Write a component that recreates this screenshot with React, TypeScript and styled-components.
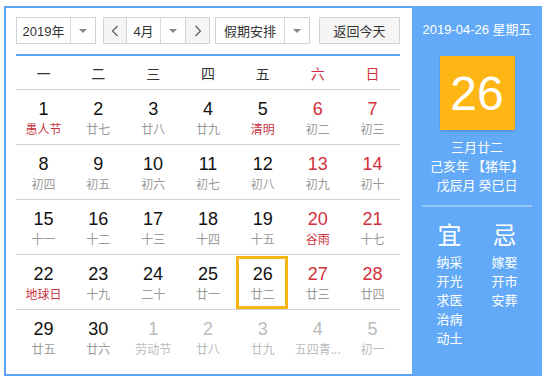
import React from 'react';
import styled, { createGlobalStyle, css } from 'styled-components';

const GlobalStyle = createGlobalStyle`
    body {
        margin: 0;
        background: #fff;
        font-family: "Liberation Sans", Arial, "Noto Sans CJK SC", sans-serif;
    }
`;

const Frame = styled.div`
    box-sizing: border-box;
    margin: 6px 0 0 4px;
    width: 538px;
    height: 370px;
    border: 2px solid #5ba3f2;
    display: flex;
`;

const Main = styled.div`
    width: 384px;
    flex-shrink: 0;
    padding: 9px 12px 0 10px;
`;

const Toolbar = styled.div`
    display: flex;
    height: 27px;
    margin-bottom: 10px;
`;

const SelectBox = styled.div<{ $w: number; $ml?: number }>`
    box-sizing: border-box;
    width: ${p => p.$w}px;
    margin-left: ${p => p.$ml ?? 0}px;
    height: 27px;
    border: 1px solid #d3d3d3;
    background: #fff;
    display: flex;
    align-items: stretch;
    font-size: 13px;
    color: #333;
`;

const SelectText = styled.div`
    flex: 1;
    display: flex;
    align-items: center;
    justify-content: center;
`;

const Arrow = styled.div`
    width: 24px;
    border-left: 1px solid #d8d8d8;
    display: flex;
    align-items: center;
    justify-content: center;
    &::after {
        content: '';
        border-left: 4px solid transparent;
        border-right: 4px solid transparent;
        border-top: 4px solid #888;
    }
`;

const NavBtn = styled.div<{ $w: number }>`
    width: ${p => p.$w}px;
    background: #f5f5f5;
    display: flex;
    align-items: center;
    justify-content: center;
`;

const MonthSelect = styled.div`
    width: 60px;
    display: flex;
    border-left: 1px solid #d3d3d3;
    border-right: 1px solid #d3d3d3;
    background: #fff;
`;

const TodayBtn = styled.div`
    box-sizing: border-box;
    margin-left: 9px;
    width: 81px;
    height: 27px;
    border: 1px solid #d3d3d3;
    background: #f5f5f5;
    display: flex;
    align-items: center;
    justify-content: center;
    font-size: 13px;
    color: #333;
`;

const WeekHead = styled.div`
    display: grid;
    grid-template-columns: repeat(7, 1fr);
    height: 33px;
    border-top: 2px solid #5ba3f2;
    border-bottom: 1px solid #d0d0d0;
`;

const WeekDay = styled.div<{ $red?: boolean }>`
    display: flex;
    align-items: center;
    justify-content: center;
    font-size: 14px;
    padding-top: 1px;
    color: ${p => (p.$red ? '#d0303d' : '#333')};
    font-family: "Noto Sans CJK SC", sans-serif;
`;

const Row = styled.div<{ $last?: boolean }>`
    display: grid;
    grid-template-columns: repeat(7, 1fr);
    height: 54px;
    border-bottom: ${p => (p.$last ? 'none' : '1px solid #d0d0d0')};
`;

const Cell = styled.div<{ $sel?: boolean }>`
    position: relative;
    display: flex;
    flex-direction: column;
    align-items: center;
    padding-top: 9px;
    box-sizing: border-box;
    ${p =>
        p.$sel &&
        css`
            &::before {
                content: '';
                position: absolute;
                left: 1px;
                right: 2px;
                top: 1px;
                bottom: 0px;
                border: 3px solid #f6b517;
            }
        `}
`;

const DayNum = styled.div<{ $tone: 'normal' | 'red' | 'gray' }>`
    font-size: 18px;
    line-height: 20px;
    color: ${p => (p.$tone === 'red' ? '#d0303d' : p.$tone === 'gray' ? '#bbb' : '#111')};
`;

const Lunar = styled.div<{ $tone: 'normal' | 'red' | 'gray' }>`
    margin-top: 2px;
    font-size: 12px;
    line-height: 16px;
    font-family: "Noto Sans CJK SC", sans-serif;
    color: ${p => (p.$tone === 'red' ? '#c8333d' : p.$tone === 'gray' ? '#bbb' : '#999')};
    white-space: nowrap;
`;

const Side = styled.div`
    width: 130px;
    flex-shrink: 0;
    margin: -2px -2px -2px 0;
    background: #62aaf8;
    color: #fff;
    display: flex;
    flex-direction: column;
    align-items: center;
    font-family: "Noto Sans CJK SC", sans-serif;
`;

const DateLine = styled.div`
    margin-top: 16px;
    font-size: 13px;
    line-height: 16px;
    font-family: "Liberation Sans", Arial, "Noto Sans CJK SC", sans-serif;
`;

const BigDay = styled.div`
    margin-top: 18px;
    width: 75px;
    height: 74px;
    background: #fdb614;
    box-shadow: 0 1px 2px rgba(0, 0, 0, 0.2);
    display: flex;
    align-items: center;
    justify-content: center;
    font-size: 48px;
    font-family: "Liberation Sans", Arial, sans-serif;
`;

const LunarInfo = styled.div`
    margin-top: 7px;
    font-size: 13px;
    line-height: 19px;
    text-align: center;
`;

const Divider = styled.div`
    margin-top: 11px;
    width: 110px;
    height: 2px;
    background: rgba(255, 255, 255, 0.35);
`;

const YiJi = styled.div`
    display: flex;
    gap: 26px;
    margin-top: 12px;
`;

const YiCol = styled.div`
    display: flex;
    flex-direction: column;
    align-items: center;
    width: 29px;
`;

const YiTitle = styled.div`
    font-size: 24px;
    line-height: 30px;
    margin-bottom: 3px;
`;

const YiItem = styled.div`
    font-size: 13px;
    line-height: 19px;
`;

const Chevron = ({ dir }: { dir: 'left' | 'right' }) => (
    <svg width="8" height="12" viewBox="0 0 8 12">
        <path
            d={dir === 'left' ? 'M6.5 1 L1.5 6 L6.5 11' : 'M1.5 1 L6.5 6 L1.5 11'}
            fill="none"
            stroke="#555"
            strokeWidth="1.1"
        />
    </svg>
);

type Tone = 'normal' | 'red' | 'gray';
type Day = { d: number; l: string; dt?: Tone; lt?: Tone; sel?: boolean };

const weeks: Day[][] = [
    [
        { d: 1, l: '愚人节', lt: 'red' },
        { d: 2, l: '廿七' },
        { d: 3, l: '廿八' },
        { d: 4, l: '廿九' },
        { d: 5, l: '清明', lt: 'red' },
        { d: 6, l: '初二', dt: 'red' },
        { d: 7, l: '初三', dt: 'red' },
    ],
    [
        { d: 8, l: '初四' },
        { d: 9, l: '初五' },
        { d: 10, l: '初六' },
        { d: 11, l: '初七' },
        { d: 12, l: '初八' },
        { d: 13, l: '初九', dt: 'red' },
        { d: 14, l: '初十', dt: 'red' },
    ],
    [
        { d: 15, l: '十一' },
        { d: 16, l: '十二' },
        { d: 17, l: '十三' },
        { d: 18, l: '十四' },
        { d: 19, l: '十五' },
        { d: 20, l: '谷雨', dt: 'red', lt: 'red' },
        { d: 21, l: '十七', dt: 'red' },
    ],
    [
        { d: 22, l: '地球日', lt: 'red' },
        { d: 23, l: '十九' },
        { d: 24, l: '二十' },
        { d: 25, l: '廿一' },
        { d: 26, l: '廿二', sel: true },
        { d: 27, l: '廿三', dt: 'red' },
        { d: 28, l: '廿四', dt: 'red' },
    ],
    [
        { d: 29, l: '廿五' },
        { d: 30, l: '廿六' },
        { d: 1, l: '劳动节', dt: 'gray', lt: 'gray' },
        { d: 2, l: '廿八', dt: 'gray', lt: 'gray' },
        { d: 3, l: '廿九', dt: 'gray', lt: 'gray' },
        { d: 4, l: '五四青...', dt: 'gray', lt: 'gray' },
        { d: 5, l: '初一', dt: 'gray', lt: 'gray' },
    ],
];

const weekNames = ['一', '二', '三', '四', '五', '六', '日'];

const App = () => {
    return (
        <>
            <GlobalStyle />
            <Frame>
                <Main>
                    <Toolbar>
                        <SelectBox $w={80}>
                            <SelectText>2019年</SelectText>
                            <Arrow />
                        </SelectBox>
                        <SelectBox $w={107} $ml={7}>
                            <NavBtn $w={22}>
                                <Chevron dir="left" />
                            </NavBtn>
                            <MonthSelect>
                                <SelectText>4月</SelectText>
                                <Arrow />
                            </MonthSelect>
                            <NavBtn $w={23}>
                                <Chevron dir="right" />
                            </NavBtn>
                        </SelectBox>
                        <SelectBox $w={95} $ml={5}>
                            <SelectText>假期安排</SelectText>
                            <Arrow />
                        </SelectBox>
                        <TodayBtn>返回今天</TodayBtn>
                    </Toolbar>
                    <WeekHead>
                        {weekNames.map((w, i) => (
                            <WeekDay key={w} $red={i >= 5}>
                                {w}
                            </WeekDay>
                        ))}
                    </WeekHead>
                    {weeks.map((week, wi) => (
                        <Row key={wi} $last={wi === weeks.length - 1}>
                            {week.map((day, di) => (
                                <Cell key={di} $sel={day.sel}>
                                    <DayNum $tone={day.dt ?? 'normal'}>{day.d}</DayNum>
                                    <Lunar $tone={day.lt ?? 'normal'}>{day.l}</Lunar>
                                </Cell>
                            ))}
                        </Row>
                    ))}
                </Main>
                <Side>
                    <DateLine>2019-04-26 星期五</DateLine>
                    <BigDay>26</BigDay>
                    <LunarInfo>
                        三月廿二
                        <br />
                        己亥年 【猪年】
                        <br />
                        戊辰月 癸巳日
                    </LunarInfo>
                    <Divider />
                    <YiJi>
                        <YiCol>
                            <YiTitle>宜</YiTitle>
                            {['纳采', '开光', '求医', '治病', '动土'].map(t => (
                                <YiItem key={t}>{t}</YiItem>
                            ))}
                        </YiCol>
                        <YiCol>
                            <YiTitle>忌</YiTitle>
                            {['嫁娶', '开市', '安葬'].map(t => (
                                <YiItem key={t}>{t}</YiItem>
                            ))}
                        </YiCol>
                    </YiJi>
                </Side>
            </Frame>
        </>
    );
};

export default App;
